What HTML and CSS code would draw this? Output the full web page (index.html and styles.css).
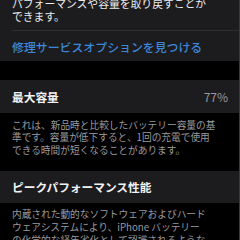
FILE: index.html
```html
<!DOCTYPE html>
<html lang="ja">
<head>
    <meta charset="UTF-8">
    <meta name="viewport" content="width=device-width, initial-scale=1.0">
    <title>バッテリーの状態</title>
    <link rel="stylesheet" href="styles.css">
</head>
<body>

    <div class="card">
        <p class="card-text">パフォーマンスや容量を取り戻すことが<br>できます。</p>
        <div class="divider"></div>
        <a class="link-row" href="#">修理サービスオプションを見つける</a>
    </div>

    <div class="card card-row">
        <span class="row-title">最大容量</span>
        <span class="row-value">77%</span>
    </div>
    <p class="footnote">これは、新品時と比較したバッテリー容量の基<br>準です。容量が低下すると、1回の充電で使用<br>できる時間が短くなることがあります。</p>

    <div class="card card-row card-peak">
        <span class="row-title">ピークパフォーマンス性能</span>
    </div>
    <p class="footnote">内蔵された動的なソフトウェアおよびハード<br>ウェアシステムにより、iPhone バッテリー<br>の化学的な経年劣化として認識されるような</p>

    <div class="scroll-bar"></div>

</body>
</html>
```

FILE: styles.css
```css
body {
    margin: 0;
    background-color: #000;
    font-family: "Noto Sans CJK JP", "Noto Sans", sans-serif;
    width: 240px;
    height: 240px;
    overflow: hidden;
}

.card {
    background-color: #1c1c1e;
}

.card-text {
    margin: -3.5px 0 0;
    padding: 0 12px 7.5px;
    font-size: 10.8px;
    line-height: 13px;
    color: #ececec;
    white-space: nowrap;
}

.divider {
    height: 1px;
    margin-left: 12px;
    background-color: #2e2e31;
}

.link-row {
    display: flex;
    align-items: center;
    height: 30px;
    padding: 0 12px;
    font-size: 11.9px;
    font-weight: 500;
    color: #3d87da;
    text-decoration: none;
    white-space: nowrap;
}

.card-row {
    display: flex;
    justify-content: space-between;
    align-items: center;
    height: 33px;
    margin-top: 19px;
    padding: 0 12px;
}

.card-peak {
    height: 32px;
    margin-top: 0;
}

.row-title {
    font-size: 11.7px;
    font-weight: 700;
    color: #f2f2f2;
}

.row-value {
    font-size: 12px;
    color: #98989d;
}

.footnote {
    margin: 0;
    padding: 5.5px 12px 14px;
    font-size: 9.7px;
    line-height: 12.8px;
    color: #9a9a9f;
    white-space: nowrap;
}

.scroll-bar {
    position: fixed;
    top: 0;
    right: 0;
    width: 1px;
    height: 240px;
    background-color: #3a3a3c;
}
```
